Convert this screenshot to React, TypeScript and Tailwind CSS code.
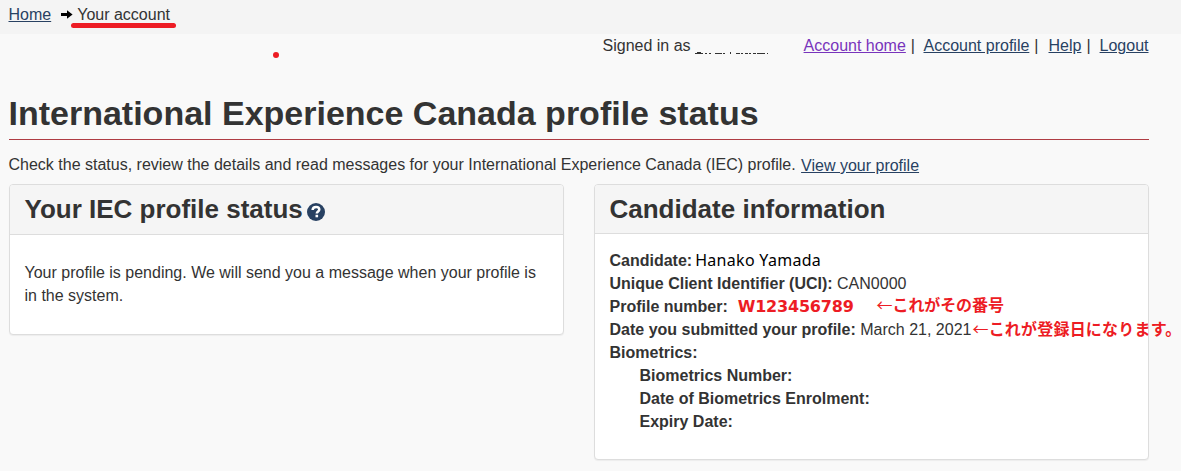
import React from 'react';

const accountLinks = [
  { label: 'Account home', className: 'text-[#7834bc] mr-[5px]' },
  { label: 'Account profile', className: 'text-[#284162] ml-[8.5px] mr-[5px]' },
  { label: 'Help', className: 'text-[#284162] ml-[10px] mr-[5px]' },
  { label: 'Logout', className: 'text-[#284162] ml-[9px]' },
];

const biometrics = ['Biometrics Number:', 'Date of Biometrics Enrolment:', 'Expiry Date:'];

const noteFont = "font-['Noto_Sans_CJK_JP',sans-serif] font-bold text-[#ed1c24]";

const Panel: React.FC<{
  title: React.ReactNode;
  className: string;
  headClassName: string;
  children: React.ReactNode;
}> = ({ title, className, headClassName, children }) => (
  <section className={`w-[555px] rounded border border-[#ddd] bg-white shadow-[0_1px_1px_rgba(0,0,0,0.05)] ${className}`}>
    <header className={`rounded-t-[3px] border-b border-[#ddd] bg-[#f5f5f5] pl-[14.5px] ${headClassName}`}>
      <h2 className="flex text-[26px] leading-[29px] font-bold pt-[10px]">{title}</h2>
    </header>
    <div className="pl-[14.5px] pr-[15px]">{children}</div>
  </section>
);

export default function App() {
  return (
    <div className="h-[471px] w-[1181px] overflow-hidden bg-[#f9f9f9] font-['Liberation_Sans',Arial,sans-serif] text-[16px] leading-[23px] text-[#333]">
      <nav className="flex h-[34px] bg-[#f4f4f4] pl-[8.5px] pt-[3px]">
        <a className="text-[#284162] underline">Home</a>
        <svg className="ml-[9.5px] mr-[4.5px] mt-[7px]" width="12" height="9" viewBox="0 0 12 9">
          <path d="M0 3h6V0.3L11.6 4.5 6 8.7V6H0z" fill="#000" />
        </svg>
        <span className="relative">
          Your account
          <span className="absolute -left-[6px] top-[20px] h-[5px] w-[105px] rounded-full bg-[#ed1c24]" />
        </span>
      </nav>

      <div className="relative flex h-[54px] justify-end pr-[32.5px]">
        <span className="absolute left-[273px] top-[18px] h-[6px] w-[6px] rounded-full bg-[#ed1c24]" />
        <span>Signed in as</span>
        {/* what is left of the hidden user name */}
        <svg className="ml-[4.5px] mr-[33.5px] mt-[17px]" width="75" height="4" viewBox="0 0 75 4" fill="none" stroke="#333" strokeWidth="1">
          <path d="M2 1.5h4M0 2.5h8M10 2.5h2M14 2.5h2M20 2.5h7M28 2.5h2M35.5 1v2M41 2.5h4M46 2.5h2M50 2.5h3M54 2.5h2M58 2.5h3M62 2.5h8M72 2.5h1" />
        </svg>
        {accountLinks.map((link, i) => (
          <React.Fragment key={link.label}>
            <a className={`underline ${link.className}`}>{link.label}</a>
            {i < accountLinks.length - 1 && <span>|</span>}
          </React.Fragment>
        ))}
      </div>

      <main className="pl-[9px] pr-[32px]">
        <h1 className="h-[52px] border-b border-[#af3c43] pt-[5px] text-[34px] leading-[40px] font-bold">
          <span className="-ml-[0.5px]">International Experience Canada profile status</span>
        </h1>
        <p className="-ml-[0.5px] flex h-[44px] pt-[13px]">
          Check the status, review the details and read messages for your International Experience Canada (IEC) profile.
          <a className="ml-[5.5px] mt-px text-[#284162] underline">View your profile</a>
        </p>

        <div className="flex items-start justify-between">
          <Panel
            className="h-[151px]"
            headClassName="h-[50px]"
            title={
              <>
                Your IEC profile status
                <svg className="ml-[4.5px] mt-[8px]" width="18" height="18" viewBox="0 0 18 18">
                  <circle cx="9" cy="9" r="9" fill="#284162" />
                  <path d="M5.6 7C5.7 4.8 7.1 3.9 9.1 3.9c2 0 3.2 1.1 3.2 2.6 0 2.1-2.5 2-2.5 4.1" fill="none" stroke="#fff" strokeWidth="2.5" />
                  <path d="M8.5 11.8h2.6v2.5H8.5z" fill="#fff" />
                </svg>
              </>
            }
          >
            <p className="pt-[26px]">Your profile is pending. We will send you a message when your profile is in the system.</p>
          </Panel>

          <Panel className="h-[276px]" headClassName="h-[49px]" title="Candidate information">
            <div className="pt-[15px] whitespace-nowrap">
              <div className="flex">
                <b>Candidate:</b>
                <span className="ml-[3px] font-['Noto_Sans',sans-serif] tracking-[0.3px] text-black">Hanako Yamada</span>
              </div>
              <div>
                <b>Unique Client Identifier (UCI):</b> CAN0000
              </div>
              <div className="flex h-[23px]">
                <b>Profile number:</b>
                <span className="ml-[10px] font-['DejaVu_Sans',sans-serif] font-bold tracking-[-0.2px] text-[#ed1c24]">W123456789</span>
                <span className={`ml-[23px] -mt-[2px] tracking-[-0.1px] ${noteFont}`}>
                  <span className="font-normal">←</span>これがその番号
                </span>
              </div>
              <div className="flex h-[23px]">
                <b>Date you submitted your profile:</b>
                <span className="ml-[4.5px]">March 21, 2021</span>
                <span className={`ml-px -mt-px tracking-[0.2px] ${noteFont}`}>
                  <span className="font-normal">←</span>これが登録日になります。
                </span>
              </div>
              <b>Biometrics:</b>
              <ul className="pl-[30px] font-bold">
                {biometrics.map(item => (
                  <li key={item}>{item}</li>
                ))}
              </ul>
            </div>
          </Panel>
        </div>
      </main>
    </div>
  );
}
